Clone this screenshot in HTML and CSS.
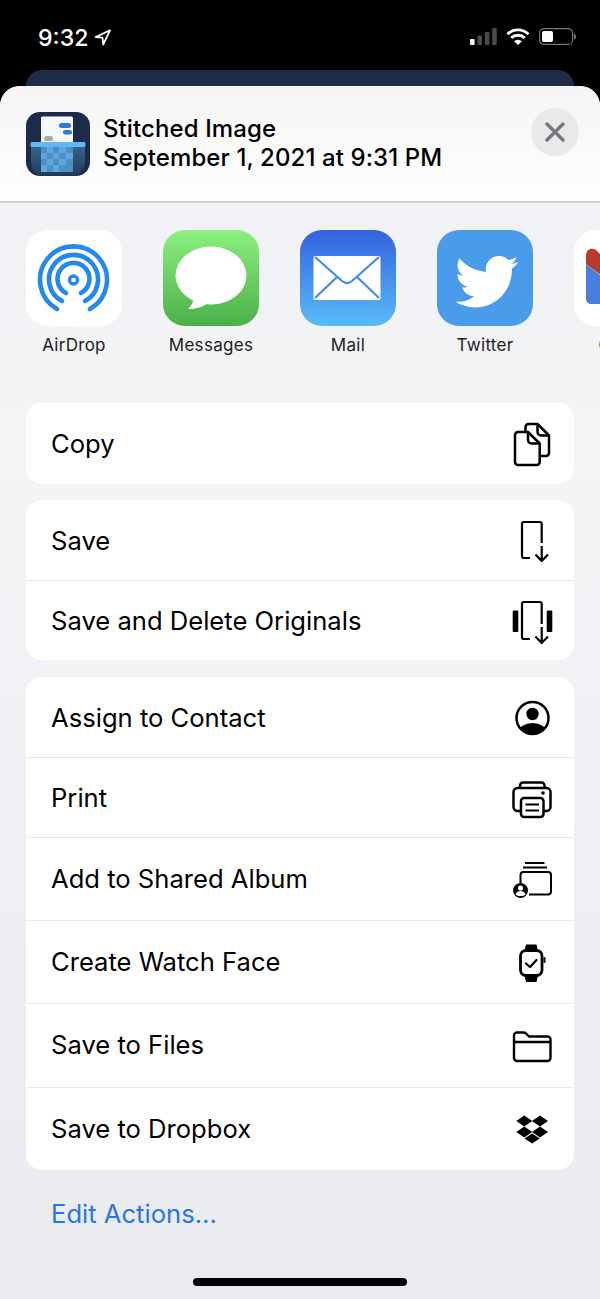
FILE: index.html
```html
<!DOCTYPE html>
<html lang="en">
<head>
    <meta charset="UTF-8">
    <meta name="viewport" content="width=device-width, initial-scale=1.0">
    <title>Share Sheet</title>
    <link rel="stylesheet" href="styles.css">
</head>
<body>
    <div class="status-bar">
        <div class="status-left">
            <span class="status-time">9:32</span>
            <svg class="status-arrow" viewBox="0 0 16 16"><path d="M15 1.200 1.600 7.600l6.400.6.7 6.400z" fill="none" stroke="#fff" stroke-width="1.700" stroke-linejoin="round"/></svg>
        </div>
        <div class="status-right">
            <svg class="status-signal" viewBox="0 0 27 17">
                <rect x="0" y="11" width="4.600" height="6" rx="1" fill="#fff"/>
                <rect x="7.400" y="7.500" width="4.600" height="9.500" rx="1" fill="#4a4a4a"/>
                <rect x="14.800" y="4" width="4.600" height="13" rx="1" fill="#4a4a4a"/>
                <rect x="22.200" y="0" width="4.600" height="17" rx="1" fill="#4a4a4a"/>
            </svg>
            <svg class="status-wifi" viewBox="0 0 24 17">
                <path d="M1.500 6.200a15 15 0 0 1 21 0M5.200 9.900a10 10 0 0 1 13.600 0" fill="none" stroke="#fff" stroke-width="2.900"/>
                <path d="M8 13.200a6 6 0 0 1 8 0L12 17z" fill="#fff"/>
            </svg>
            <svg class="status-battery" viewBox="0 0 37 17">
                <rect x="0.600" y="0.600" width="33" height="15.800" rx="4.500" fill="none" stroke="#777" stroke-width="1.200"/>
                <rect x="3" y="3" width="11" height="11" rx="2" fill="#fff"/>
                <path d="M35 5.500c1.300.4 2 1.600 2 3s-.7 2.600-2 3z" fill="#777"/>
            </svg>
        </div>
    </div>
    <div class="peek-card"></div>

    <div class="sheet">
        <div class="sheet-header">
            <svg class="app-thumb" viewBox="0 0 64 64">
                <defs>
                    <linearGradient id="basketGrad" x1="0" y1="0" x2="0" y2="1">
                        <stop offset="0" stop-color="#3a6389"/>
                        <stop offset="1" stop-color="#203a5c"/>
                    </linearGradient>
                </defs>
                <rect width="64" height="64" rx="14" fill="#1c2b4a"/>
                <path d="M15 6a1.500 1.500 0 0 1 1.500-1.500h29A1.500 1.500 0 0 1 47 6v25H15z" fill="#f4f6f8"/>
                <rect x="33" y="11" width="12" height="5" rx="2.500" fill="#2f77d8"/>
                <rect x="37" y="18" width="9" height="4.500" rx="2.200" fill="#2f77d8"/>
                <rect x="18" y="24" width="9" height="5" rx="2.500" fill="#a8a9ad"/>
                <path d="M5 35h54v15a14 14 0 0 1-10 13.600H15A14 14 0 0 1 5 50z" fill="url(#basketGrad)"/>
                <rect x="15" y="35" width="32" height="25" fill="#4a8fc5"/>
                <rect x="21" y="35" width="6" height="6" fill="#5fa6db"/>
                <rect x="33" y="35" width="7" height="6" fill="#5fa6db"/>
                <rect x="15" y="41" width="6" height="6" fill="#5fa6db"/>
                <rect x="27" y="41" width="6" height="6" fill="#5fa6db"/>
                <rect x="40" y="41" width="7" height="6" fill="#5fa6db"/>
                <rect x="21" y="47" width="6" height="6" fill="#5fa6db"/>
                <rect x="33" y="47" width="7" height="6" fill="#5fa6db"/>
                <rect x="15" y="53" width="6" height="7" fill="#5fa6db"/>
                <rect x="27" y="53" width="6" height="7" fill="#5fa6db"/>
                <rect x="4.500" y="30" width="55" height="5" rx="1.500" fill="#62b8f2"/>
            </svg>
            <div class="header-text">
                <div class="header-line">Stitched Image</div>
                <div class="header-line">September 1, 2021 at 9:31 PM</div>
            </div>
            <div class="close-btn">
                <svg class="close-icon" viewBox="0 0 20 20"><path d="M2 2l16 16M18 2 2 18" fill="none" stroke="#77777c" stroke-width="3.400" stroke-linecap="round"/></svg>
            </div>
        </div>

        <div class="app-row">
            <div class="app-item">
                <svg class="app-icon" viewBox="0 0 96 96">
                    <rect width="96" height="96" rx="22" fill="#fff"/>
                    <g fill="none" stroke="#2489ea" stroke-width="4.600" stroke-linecap="round">
                        <path d="M31 79a33.500 33.500 0 1 1 33 0"/>
                        <path d="M36 71a24.500 24.500 0 1 1 23 0"/>
                        <path d="M40 63a16 16 0 1 1 15 0"/>
                        <circle cx="47.500" cy="50" r="4" stroke-width="3.500"/>
                    </g>
                </svg>
                <span class="app-label">AirDrop</span>
            </div>
            <div class="app-item">
                <svg class="app-icon" viewBox="0 0 96 96">
                    <defs>
                        <linearGradient id="msgGrad" x1="0" y1="0" x2="0" y2="1">
                            <stop offset="0" stop-color="#8cef80"/>
                            <stop offset="1" stop-color="#4bb04a"/>
                        </linearGradient>
                    </defs>
                    <rect width="96" height="96" rx="22" fill="url(#msgGrad)"/>
                    <ellipse cx="48" cy="45.500" rx="35.500" ry="29" fill="#fff"/>
                    <path d="M31 66c0 6-3 10-6 13 6 .5 15-2 20-6z" fill="#fff"/>
                </svg>
                <span class="app-label">Messages</span>
            </div>
            <div class="app-item">
                <svg class="app-icon" viewBox="0 0 96 96">
                    <defs>
                        <linearGradient id="mailGrad" x1="0" y1="0" x2="0" y2="1">
                            <stop offset="0" stop-color="#3462de"/>
                            <stop offset="1" stop-color="#5abbf9"/>
                        </linearGradient>
                    </defs>
                    <rect width="96" height="96" rx="22" fill="url(#mailGrad)"/>
                    <rect x="13.500" y="26" width="67" height="44" rx="1.500" fill="#fff"/>
                    <g fill="none" stroke="#3f8de6" stroke-width="2.200">
                        <path d="M15 27l27 24c3 2.500 7 2.500 10 0l27-24"/>
                        <path d="M15 68l22-21M79 68 57 47"/>
                    </g>
                </svg>
                <span class="app-label">Mail</span>
            </div>
            <div class="app-item">
                <svg class="app-icon" viewBox="0 0 96 96">
                    <rect width="96" height="96" rx="22" fill="#4a9bea"/>
                    <path transform="translate(18 20) scale(2.640)" fill="#fff" d="M23.953 4.570a10 10 0 0 1-2.825.775 4.958 4.958 0 0 0 2.163-2.723c-.951.555-2.005.959-3.127 1.184a4.920 4.920 0 0 0-8.384 4.482C7.690 8.095 4.067 6.130 1.640 3.162a4.822 4.822 0 0 0-.666 2.475c0 1.710.870 3.213 2.188 4.096a4.904 4.904 0 0 1-2.228-.616v.060a4.923 4.923 0 0 0 3.946 4.827 4.996 4.996 0 0 1-2.212.085 4.936 4.936 0 0 0 4.604 3.417 9.867 9.867 0 0 1-6.102 2.105c-.390 0-.779-.023-1.170-.067a13.995 13.995 0 0 0 7.557 2.209c9.053 0 13.998-7.496 13.998-13.985 0-.210 0-.420-.015-.630A9.935 9.935 0 0 0 24 4.590z"/>
                </svg>
                <span class="app-label">Twitter</span>
            </div>
            <div class="app-item">
                <svg class="app-icon" viewBox="0 0 96 96">
                    <rect width="96" height="96" rx="22" fill="#fff"/>
                    <path d="M12 34V26c0-9 9-9 13-3l23 24v14z" fill="#b73a2c"/>
                    <path d="M12 34l36 28 36-28v34c0 4-2 6-6 6H18c-4 0-6-2-6-6z" fill="#4a7fe0"/>
                </svg>
                <span class="app-label">Gmail</span>
            </div>
        </div>

        <div class="action-group">
            <div class="action-row row-first">
                <span>Copy</span>
                <svg class="action-icon" viewBox="0 0 44 48"><g fill="none" stroke="#000" stroke-width="2.500" stroke-linejoin="round">
                    <path d="M8 12h10l11.700 11.500V42a3 3 0 0 1-3 3H8a3 3 0 0 1-3-3V15a3 3 0 0 1 3-3z"/>
                    <path d="M18 12v8a3.500 3.500 0 0 0 3.500 3.500h8"/>
                    <path d="M15.500 11V7a3 3 0 0 1 3-3h9L39 15.500V33a3 3 0 0 1-3 3h-6.300"/>
                    <path d="M27.500 4v8a3.500 3.500 0 0 0 3.500 3.500h8"/>
                </g></svg>
            </div>
        </div>

        <div class="action-group group-wide-gap">
            <div class="action-row">
                <span>Save</span>
                <svg class="action-icon" viewBox="0 0 44 48"><g fill="none" stroke="#000" stroke-width="2.200">
                    <path d="M31.700 27V8a2 2 0 0 0-2-2H14a2 2 0 0 0-2 2v32a2 2 0 0 0 2 2h6"/>
                    <path d="M31.700 30v15M25.500 38.500l6.200 6.500 6.300-6.500" stroke-linejoin="round"/>
                </g></svg>
            </div>
            <div class="action-row">
                <span>Save and Delete Originals</span>
                <svg class="action-icon" viewBox="0 0 44 48">
                    <g fill="none" stroke="#000" stroke-width="2.200">
                        <path d="M31.700 27V7a2 2 0 0 0-2-2H14a2 2 0 0 0-2 2v33a2 2 0 0 0 2 2h6"/>
                        <path d="M31.700 30v16M25.500 39.500l6.200 6.500 6.300-6.500" stroke-linejoin="round"/>
                    </g>
                    <rect x="2.700" y="13.500" width="5.600" height="21.500" rx="1" fill="#000"/>
                    <rect x="36.700" y="13.500" width="5.600" height="21.500" rx="1" fill="#000"/>
                </svg>
            </div>
        </div>

        <div class="action-group">
            <div class="action-row">
                <span>Assign to Contact</span>
                <svg class="action-icon" viewBox="0 0 44 48">
                    <defs><clipPath id="contactClip"><circle cx="22.500" cy="25" r="15.500"/></clipPath></defs>
                    <circle cx="22.500" cy="25" r="16" fill="none" stroke="#000" stroke-width="2.500"/>
                    <circle cx="22.500" cy="21" r="6.200" fill="#000"/>
                    <ellipse cx="22.500" cy="39.500" rx="14" ry="9.500" fill="#000" clip-path="url(#contactClip)"/>
                </svg>
            </div>
            <div class="action-row">
                <span>Print</span>
                <svg class="action-icon" viewBox="0 0 44 48"><g fill="none" stroke="#000" stroke-width="2.500" stroke-linejoin="round">
                    <path d="M10.500 37H8a4 4 0 0 1-4.500-4V18a4 4 0 0 1 4-4h29a4 4 0 0 1 4 4v15a4 4 0 0 1-4 4h-3"/>
                    <path d="M10 14v-2.500a3 3 0 0 1 3-3h18.500a3 3 0 0 1 3 3V14"/>
                    <rect x="11" y="24" width="22.500" height="19" rx="3"/>
                    <path d="M15.500 30.500h13.500M15.500 36.500h13.500" stroke-width="2"/>
                </g><circle cx="33" cy="19" r="1.800" fill="#000"/></svg>
            </div>
            <div class="action-row row-tall">
                <span>Add to Shared Album</span>
                <svg class="action-icon" viewBox="0 0 44 48">
                    <g fill="none" stroke="#000" stroke-width="2">
                        <path d="M15 8h19.500M13 12.500h24"/>
                        <path d="M10.500 28V20a3 3 0 0 1 3-3H38a3 3 0 0 1 3 3v16.500a3 3 0 0 1-3 3H19"/>
                    </g>
                    <circle cx="10.500" cy="35.500" r="7.500" fill="#000"/>
                    <circle cx="10.500" cy="33" r="2.600" fill="#fff"/>
                    <path d="M5.500 39.500c.8-2.500 2.700-3.500 5-3.500s4.200 1 5 3.500c-1.300 1-3 1.500-5 1.500s-3.700-.5-5-1.500z" fill="#fff"/>
                </svg>
            </div>
            <div class="action-row row-tall">
                <span>Create Watch Face</span>
                <svg class="action-icon" viewBox="0 0 44 48">
                    <path d="M14.500 13 16 6.500h10.500L28 13zM14.500 37 16 44h10.500L28 37z" fill="#000"/>
                    <rect x="10.500" y="12.500" width="21.500" height="25" rx="5.500" fill="none" stroke="#000" stroke-width="2.800"/>
                    <rect x="33.500" y="19" width="2" height="6" rx="1" fill="#000"/>
                    <path d="M16 25.500l4 3.500 6.500-7" fill="none" stroke="#000" stroke-width="2.300" stroke-linecap="round" stroke-linejoin="round"/>
                </svg>
            </div>
            <div class="action-row row-taller">
                <span>Save to Files</span>
                <svg class="action-icon" viewBox="0 0 44 48"><g fill="none" stroke="#000" stroke-width="2.400" stroke-linejoin="round">
                    <path d="M7 39h30.500a3 3 0 0 0 3-3V17.500a3 3 0 0 0-3-3H19l-3-3a4 4 0 0 0-2.500-1H7a3 3 0 0 0-3 3V36a3 3 0 0 0 3 3z"/>
                    <path d="M4 20h36.500"/>
                </g></svg>
            </div>
            <div class="action-row row-tall">
                <span>Save to Dropbox</span>
                <svg class="action-icon" viewBox="0 0 44 48"><path fill="#000" d="M14.300 10.500l8 5.500-8 5.500-8-5.500zM30 10.500l8 5.500-8 5.500-8-5.500zM14.300 21.500l8 5.500-8 5.500-8-5.500zM30 21.500l8 5.500-8 5.500-8-5.500zM22.200 28.500l7.600 5-7.600 5-7.600-5z"/></svg>
            </div>
        </div>

        <div class="edit-actions">Edit Actions...</div>
        <div class="home-bar"></div>
    </div>
</body>
</html>
```

FILE: styles.css
```css
* {
    box-sizing: border-box;
}
html, body {
    margin: 0;
    padding: 0;
}
body {
    width: 600px;
    height: 1299px;
    overflow: hidden;
    background-color: #000;
    font-family: Inter, "Liberation Sans", sans-serif;
    color: #000;
}
.status-bar {
    height: 70px;
    padding: 28px 24px 0 38px;
    display: flex;
    justify-content: space-between;
    align-items: flex-start;
}
.status-left {
    display: flex;
    align-items: center;
    gap: 6px;
}
.status-time {
    color: #fff;
    font-size: 23.200px;
    font-weight: 500;
    line-height: 17px;
    padding-top: 2px;
}
.status-arrow {
    width: 17px;
    height: 17px;
}
.status-right {
    display: flex;
    align-items: center;
    gap: 9px;
}
.status-signal {
    width: 27px;
    height: 17px;
}
.status-wifi {
    width: 24px;
    height: 17px;
}
.status-battery {
    width: 37px;
    height: 17px;
}
.peek-card {
    height: 16px;
    margin: 0 26px;
    background-color: #1f2c45;
    border-radius: 16px 16px 0 0;
}
.sheet {
    height: 1213px;
    display: flex;
    flex-direction: column;
    background: linear-gradient(180deg, #f0f1f4 0%, #f3f4f6 30%, #e9ebef 100%);
    border-radius: 20px 20px 0 0;
    overflow: hidden;
}
.sheet-header {
    height: 117px;
    flex-shrink: 0;
    display: flex;
    align-items: flex-start;
    padding: 26px 21px 0 26px;
    background: linear-gradient(180deg, #f5f5f4 0%, #fefefe 100%);
    border-bottom: 2px solid #cfd0d5;
}
.app-thumb {
    width: 64px;
    height: 64px;
    flex-shrink: 0;
}
.header-text {
    flex: 1;
    margin-left: 13px;
    padding-top: 2px;
}
.header-line {
    font-size: 24px;
    font-weight: 500;
    letter-spacing: 0.1px;
    line-height: 29px;
}
.close-btn {
    width: 48px;
    height: 48px;
    margin-top: -4px;
    border-radius: 50%;
    background-color: #e9e9eb;
    display: flex;
    align-items: center;
    justify-content: center;
}
.close-icon {
    width: 20px;
    height: 20px;
}
.app-row {
    display: flex;
    gap: 41px;
    padding: 27px 0 0 26px;
    height: 200px;
    flex-shrink: 0;
    overflow: hidden;
}
.app-item {
    width: 96px;
    flex-shrink: 0;
    display: flex;
    flex-direction: column;
    align-items: center;
}
.app-icon {
    width: 96px;
    height: 96px;
    display: block;
}
.app-label {
    margin-top: 9px;
    font-size: 17px;
    letter-spacing: 0.3px;
    line-height: 20px;
    color: #1c1c1e;
    white-space: nowrap;
}
.action-group {
    margin: 0 26px 16px;
    background-color: #fff;
    border-radius: 16px;
    overflow: hidden;
}
.group-wide-gap {
    margin-bottom: 17px;
}
.action-row {
    height: 80px;
    display: flex;
    align-items: center;
    justify-content: space-between;
    padding: 0 20px 0 25px;
    font-size: 25.600px;
    border-top: 1px solid #e9e9eb;
}
.action-row:first-child {
    border-top: none;
}
.row-first {
    height: 81px;
}
.row-tall {
    height: 83px;
}
.row-taller {
    height: 84px;
}
.row-tall span,
.row-taller span {
    margin-bottom: 2px;
}
.action-icon {
    width: 44px;
    height: 48px;
    flex-shrink: 0;
}
.edit-actions {
    margin: 12px 0 0 51px;
    font-size: 25.600px;
    line-height: 32px;
    color: #2a76e2;
}
.home-bar {
    width: 214px;
    height: 8px;
    margin: auto auto 13px;
    background-color: #000;
    border-radius: 4px;
}
```
